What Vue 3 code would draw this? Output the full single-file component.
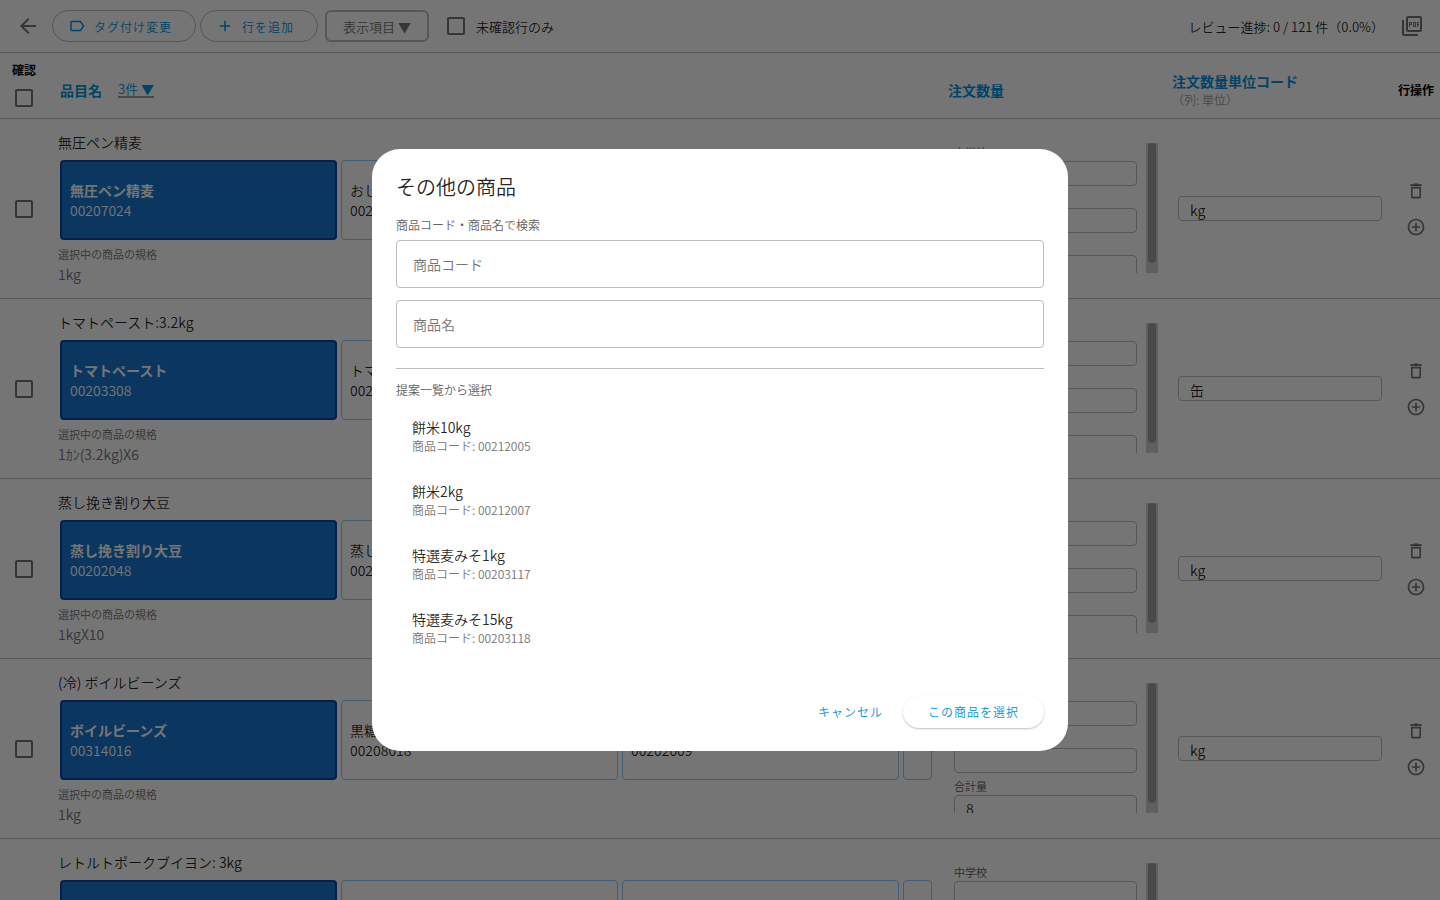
<script setup>
import { ref } from 'vue';

const onlyUnchecked = ref(false);
const allChecked = ref(false);
const productCode = ref('');
const productName = ref('');

const rows = ref([
  {
    id: 1,
    title: '無圧ペン精麦',
    spec: '1kg',
    unit: 'kg',
    total: '',
    checked: false,
    candidates: [
      { name: '無圧ペン精麦', code: '00207024' },
      { name: 'おし麦', code: '00207012' },
      { name: 'もち麦', code: '00207015' }
    ]
  },
  {
    id: 2,
    title: 'トマトペースト:3.2kg',
    spec: '1ｶﾝ(3.2kg)X6',
    unit: '缶',
    total: '',
    checked: false,
    candidates: [
      { name: 'トマトペースト', code: '00203308' },
      { name: 'トマトピューレ', code: '00203310' },
      { name: 'トマトケチャップ', code: '00203312' }
    ]
  },
  {
    id: 3,
    title: '蒸し挽き割り大豆',
    spec: '1kgX10',
    unit: 'kg',
    total: '',
    checked: false,
    candidates: [
      { name: '蒸し挽き割り大豆', code: '00202048' },
      { name: '蒸し大豆', code: '00202050' },
      { name: '大豆水煮', code: '00202052' }
    ]
  },
  {
    id: 4,
    title: '(冷) ボイルビーンズ',
    spec: '1kg',
    unit: 'kg',
    total: '8',
    checked: false,
    candidates: [
      { name: 'ボイルビーンズ', code: '00314016' },
      { name: '黒糖ビーンズ', code: '00208018' },
      { name: 'ミックスビーンズ', code: '00202009' }
    ]
  },
  {
    id: 5,
    title: 'レトルトポークブイヨン: 3kg',
    spec: '3kg',
    unit: '袋',
    total: '',
    checked: false,
    candidates: [
      { name: 'ポークブイヨン', code: '00205101' },
      { name: 'チキンブイヨン', code: '00205102' },
      { name: 'ビーフブイヨン', code: '00205103' }
    ]
  }
]);

const suggestions = [
  { name: '餅米10kg', code: '00212005' },
  { name: '餅米2kg', code: '00212007' },
  { name: '特選麦みそ1kg', code: '00203117' },
  { name: '特選麦みそ15kg', code: '00203118' }
];
</script>

<template>
  <div class="page">
    <header class="toolbar">
      <button class="icon-btn back" aria-label="戻る">
        <svg width="24" height="24" viewBox="0 0 24 24"><path d="M20 11H7.83l5.59-5.59L12 4l-8 8 8 8 1.41-1.41L7.83 13H20v-2z" /></svg>
      </button>
      <button class="pill-btn">
        <svg width="18" height="18" viewBox="0 0 24 24"><path d="M16 17H5V7h11l3.55 5M17.63 5.84C17.27 5.33 16.67 5 16 5H5a2 2 0 0 0-2 2v10a2 2 0 0 0 2 2h11c.67 0 1.27-.34 1.63-.85L22 12l-4.37-6.16z" /></svg>
        <span class="bar-text">タグ付け変更</span>
      </button>
      <button class="pill-btn">
        <svg width="18" height="18" viewBox="0 0 24 24"><path d="M19 13h-6v6h-2v-6H5v-2h6V5h2v6h6v2z" /></svg>
        <span class="bar-text">行を追加</span>
      </button>
      <button class="columns-btn"><span class="bar-text">表示項目 ▼</span></button>
      <label class="filter">
        <input v-model="onlyUnchecked" type="checkbox" class="checkbox" />
        <span class="bar-text">未確認行のみ</span>
      </label>
      <span class="progress bar-text">レビュー進捗: 0 / 121 件（0.0%）</span>
      <button class="icon-btn" aria-label="PDF">
        <svg width="24" height="24" viewBox="0 0 24 24"><path d="M20 2H8c-1.1 0-2 .9-2 2v12c0 1.1.9 2 2 2h12c1.1 0 2-.9 2-2V4c0-1.1-.9-2-2-2zm0 14H8V4h12v12zM4 6H2v14c0 1.1.9 2 2 2h14v-2H4V6zm12 6V9c0-.55-.45-1-1-1h-2v5h2c.55 0 1-.45 1-1zm-2-3h1v3h-1V9zm4 2h1v-1h-1V9h1V8h-2v5h1zm-8 0h1c.55 0 1-.45 1-1V9c0-.55-.45-1-1-1H9v5h1v-2zm0-2h1v1h-1V9z" /></svg>
      </button>
    </header>

    <table class="review-table">
      <colgroup>
        <col class="col-narrow" />
        <col />
        <col class="col-wide" />
        <col class="col-wide" />
        <col class="col-narrow" />
      </colgroup>
      <thead>
        <tr>
          <th class="check-head">
            <span>確認</span>
            <input v-model="allChecked" type="checkbox" class="checkbox" aria-label="すべて確認" />
          </th>
          <th class="name-head">
            <div class="name-head-inner">
              <span class="head-text">品目名</span>
              <button class="count-btn">3件 ▼</button>
            </div>
          </th>
          <th class="field-head"><span class="head-text">注文数量</span></th>
          <th class="field-head">
            <span class="head-text">注文数量単位コード</span>
            <span class="head-sub">（列: 単位）</span>
          </th>
          <th class="ops-head">行操作</th>
        </tr>
      </thead>
      <tbody>
        <tr v-for="row in rows" :key="row.id">
          <td class="check-cell">
            <input v-model="row.checked" type="checkbox" class="checkbox" aria-label="確認" />
          </td>
          <td class="name-cell">
            <div class="row-title">{{ row.title }}</div>
            <div class="cards">
              <button
                v-for="(item, index) in row.candidates"
                :key="item.code"
                class="card"
                :class="{ selected: index === 0 }"
              >
                <span class="card-name">{{ item.name }}</span>
                <span>{{ item.code }}</span>
              </button>
              <button class="card" aria-label="その他の商品"></button>
            </div>
            <div class="spec-label">選択中の商品の規格</div>
            <div class="spec-value">{{ row.spec }}</div>
          </td>
          <td class="field-cell qty-cell">
            <div class="qty">
              <div class="qty-fields">
                <label class="qty-field">中学校<input type="text" class="cell-input" /></label>
                <label class="qty-field">小学校<input type="text" class="cell-input" /></label>
                <label class="qty-field">合計量<input v-model="row.total" type="text" class="cell-input" /></label>
              </div>
              <div class="scroll-track"><div class="scroll-thumb"></div></div>
            </div>
          </td>
          <td class="field-cell">
            <input v-model="row.unit" type="text" class="cell-input" aria-label="注文数量単位コード" />
          </td>
          <td class="ops-cell">
            <button class="row-btn" aria-label="行を削除">
              <svg width="20" height="20" viewBox="0 0 24 24"><path d="M6 19c0 1.1.9 2 2 2h8c1.1 0 2-.9 2-2V7H6v12zM8 9h8v10H8V9zm7.5-5-1-1h-5l-1 1H5v2h14V4h-3.5z" /></svg>
            </button>
            <button class="row-btn" aria-label="行を追加">
              <svg width="20" height="20" viewBox="0 0 24 24"><path d="M13 7h-2v4H7v2h4v4h2v-4h4v-2h-4V7zm-1-5C6.48 2 2 6.48 2 12s4.48 10 10 10 10-4.48 10-10S17.52 2 12 2zm0 18c-4.41 0-8-3.59-8-8s3.59-8 8-8 8 3.59 8 8-3.59 8-8 8z" /></svg>
            </button>
          </td>
        </tr>
      </tbody>
    </table>
  </div>

  <div class="overlay">
    <div class="dialog" role="dialog" aria-labelledby="dialog-title">
      <h2 id="dialog-title" class="dialog-title">その他の商品</h2>
      <div class="section-label search-label">商品コード・商品名で検索</div>
      <div class="search-fields">
        <input v-model="productCode" type="text" class="search-input" placeholder="商品コード" aria-label="商品コード" />
        <input v-model="productName" type="text" class="search-input" placeholder="商品名" aria-label="商品名" />
      </div>
      <hr class="divider" />
      <div class="section-label">提案一覧から選択</div>
      <ul class="suggestions">
        <li v-for="item in suggestions" :key="item.code" class="suggestion">
          <span class="suggestion-name">{{ item.name }}</span>
          <span class="suggestion-code">商品コード: {{ item.code }}</span>
        </li>
      </ul>
      <div class="dialog-actions">
        <button class="text-btn">キャンセル</button>
        <button class="select-btn">この商品を選択</button>
      </div>
    </div>
  </div>
</template>

<style>
body {
  margin: 0;
  overflow: hidden;
}
</style>

<style scoped>
.page,
.overlay {
  font-family: "Noto Sans CJK JP", sans-serif;
  font-size: 14px;
  font-weight: 350;
  line-height: 20px;
  color: rgba(0, 0, 0, 0.87);
}

.page {
  height: 100vh;
  overflow: hidden;
  background: #fff;
}

button,
input {
  font: inherit;
  color: inherit;
  box-sizing: border-box;
  margin: 0;
}

button {
  padding: 0;
  border: none;
  background: none;
  cursor: pointer;
}

svg {
  display: block;
  fill: currentColor;
}

.checkbox {
  appearance: none;
  display: block;
  width: 18px;
  height: 18px;
  border: 2px solid #757575;
  border-radius: 2px;
}

/* Toolbar */
.toolbar {
  display: flex;
  align-items: center;
  height: 52px;
  padding: 0 16px;
  border-bottom: 1px solid #bdbdbd;
}

.bar-text {
  display: block;
  padding-top: 2px;
}

.icon-btn {
  color: #757575;
}

.back {
  margin-right: 12px;
}

.pill-btn {
  display: flex;
  align-items: center;
  gap: 8px;
  height: 32px;
  margin-right: 4px;
  padding: 0 23px;
  border: 1px solid #bdbdbd;
  border-radius: 16px;
  font-size: 12px;
  letter-spacing: 1px;
  color: #0095e0;
}

.pill-btn svg {
  margin-left: -8px;
}

.columns-btn {
  height: 32px;
  margin-left: 3px;
  padding: 0 16px;
  border: 2px solid #bdbdbd;
  border-radius: 6px;
  font-size: 13px;
  color: #757575;
}

.filter {
  display: flex;
  align-items: center;
  gap: 11px;
  margin-left: 18px;
  font-size: 13px;
}

.progress {
  margin-left: auto;
  margin-right: 16px;
  font-size: 13px;
}

/* Table */
.review-table {
  width: 100%;
  table-layout: fixed;
  border-collapse: separate;
  border-spacing: 0;
}

.col-narrow {
  width: 48px;
}

.col-wide {
  width: 224px;
}

th,
td {
  box-sizing: border-box;
  padding: 0;
  border-bottom: 1px solid #bdbdbd;
  text-align: left;
}

th {
  height: 66px;
}

td {
  height: 180px;
}

.check-head {
  vertical-align: top;
  font-size: 12px;
  text-align: center;
  color: #000;
}

.check-head span {
  display: block;
  padding: 7px 0 9px;
}

.check-head .checkbox,
.check-cell .checkbox {
  margin: 0 auto;
}

.name-head {
  padding: 8px 12px 0;
}

.name-head-inner {
  display: flex;
  align-items: center;
  gap: 16px;
}

.head-text {
  display: block;
  font-weight: 700;
  color: #0095e0;
}

.count-btn {
  border-bottom: 2px solid #9e9e9e;
  font-size: 13px;
  font-weight: 350;
  line-height: 14px;
  color: #0095e0;
}

.field-head {
  padding: 8px 4px 0;
}

.head-sub {
  display: block;
  font-size: 12px;
  font-weight: 350;
  line-height: 18px;
  color: #9e9e9e;
}

.ops-head {
  padding-top: 8px;
  font-size: 12px;
  text-align: center;
  color: #000;
}

.name-cell {
  padding: 0 12px 2px 10px;
}

.row-title {
  margin-bottom: 8px;
}

.cards {
  display: grid;
  grid-template-columns: repeat(3, minmax(0, 1fr)) 29px;
  gap: 4px;
  height: 80px;
  margin-left: 2px;
}

.card {
  display: flex;
  flex-direction: column;
  justify-content: center;
  min-width: 0;
  padding: 0 8px;
  border: 1px solid #90caf9;
  border-radius: 4px;
  text-align: left;
  white-space: nowrap;
}

.card.selected {
  border: 2px solid #0d47a1;
  background: #1976d2;
  color: #fff;
}

.card.selected .card-name {
  font-weight: 700;
}

.spec-label {
  margin-top: 4px;
  font-size: 11px;
  color: #757575;
}

.spec-value {
  color: #757575;
}

.field-cell {
  padding: 0 10px;
}

.qty-cell {
  padding-bottom: 2px;
}

.qty {
  display: flex;
  gap: 9px;
  height: 130px;
  overflow: hidden;
}

.qty-fields {
  display: flex;
  flex: 1;
  flex-direction: column;
  gap: 4px;
}

.qty-field {
  display: block;
  font-size: 11px;
  line-height: 18px;
  color: #616161;
}

.cell-input {
  display: block;
  width: 100%;
  height: 25px;
  padding: 2px 11px 0;
  border: 1px solid #bdbdbd;
  border-radius: 4px;
  background: none;
  font-size: 14px;
  line-height: 20px;
  color: rgba(0, 0, 0, 0.87);
}

.scroll-track {
  width: 12px;
  background: #d0d0d0;
}

.scroll-thumb {
  height: 120px;
  margin: 0 2px;
  border-radius: 4px;
  background: #a0a0a0;
}

.row-btn {
  display: flex;
  align-items: center;
  justify-content: center;
  width: 36px;
  height: 36px;
  margin: 0 auto;
  color: #757575;
}

/* Dialog */
.overlay {
  position: fixed;
  inset: 0;
  display: flex;
  align-items: center;
  justify-content: center;
  background: rgba(0, 0, 0, 0.54);
}

.dialog {
  box-sizing: border-box;
  width: 100%;
  max-width: 696px;
  padding: 23px 24px;
  border-radius: 28px;
  background: #fff;
}

.dialog-title {
  margin: 0 0 13px;
  font-size: 20px;
  font-weight: 350;
  line-height: 30px;
}

.section-label {
  font-size: 12px;
  color: #616161;
}

.search-label {
  margin-bottom: 5px;
}

.search-fields {
  display: flex;
  flex-direction: column;
  gap: 12px;
}

.search-input {
  width: 100%;
  height: 48px;
  padding: 0 16px;
  border: 1px solid #bdbdbd;
  border-radius: 4px;
}

.search-input::placeholder {
  color: #757575;
  opacity: 1;
}

.divider {
  height: 1px;
  margin: 20px 0 11px;
  border: none;
  background: #bdbdbd;
}

.suggestions {
  margin: 4px 0 36px;
  padding: 0;
  list-style: none;
}

.suggestion {
  display: flex;
  flex-direction: column;
  justify-content: center;
  height: 64px;
  padding: 0 16px;
}

.suggestion-code {
  font-size: 12px;
  line-height: 18px;
  color: #757575;
}

.dialog-actions {
  display: flex;
  justify-content: flex-end;
  gap: 4px;
}

.text-btn,
.select-btn {
  height: 32px;
  padding: 0 16px;
  border-radius: 16px;
  font-size: 12px;
  letter-spacing: 1px;
  color: #0095e0;
}

.select-btn {
  padding: 0 25px;
  box-shadow: 0 1px 2px rgba(0, 0, 0, 0.25);
}
</style>
